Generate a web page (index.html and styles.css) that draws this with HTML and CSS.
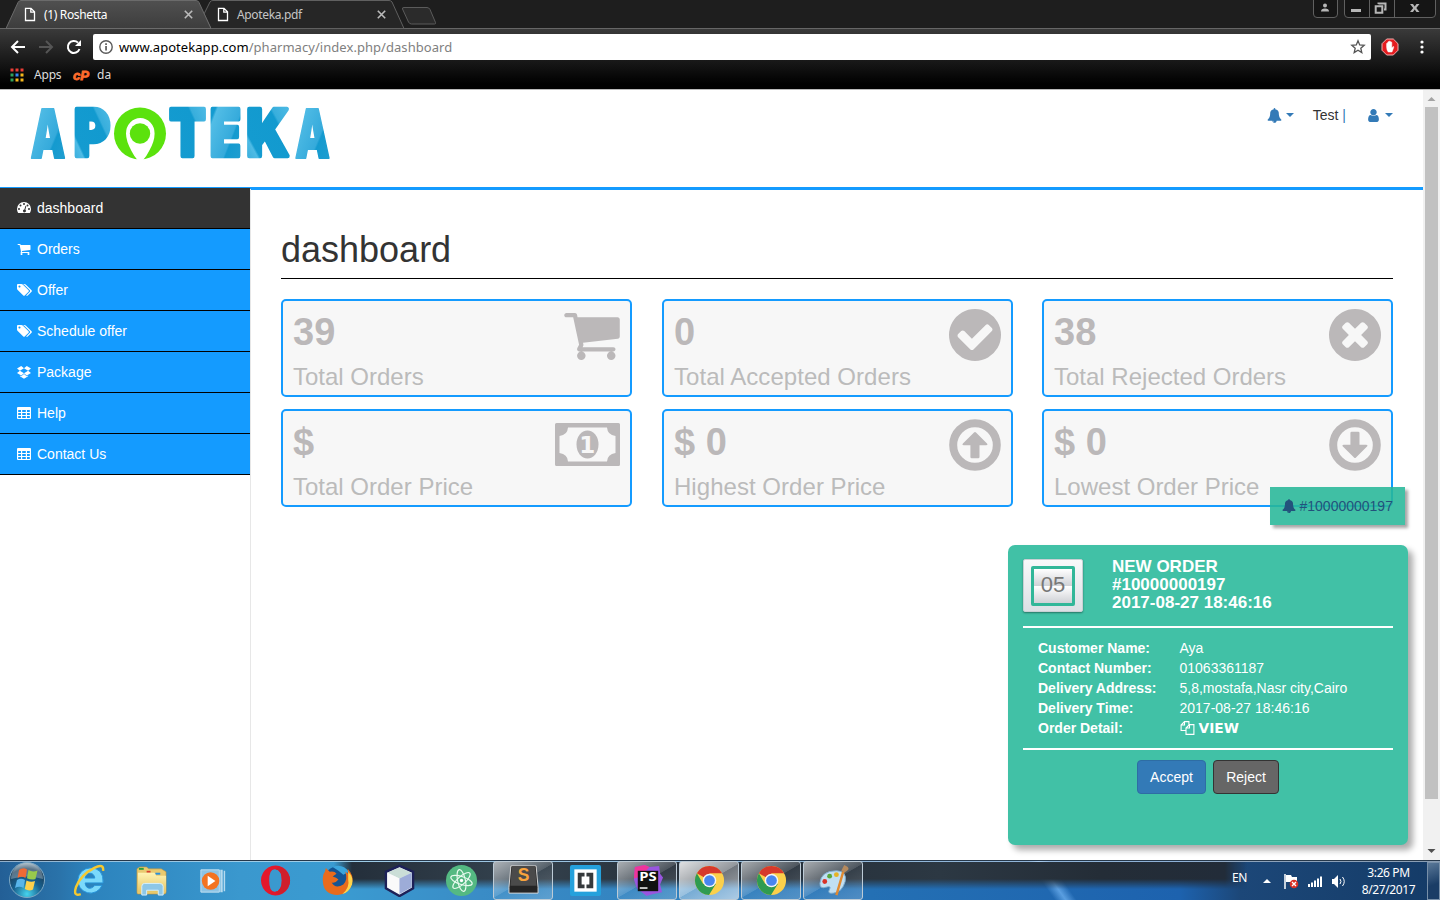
FILE: index.html
```html
<!DOCTYPE html>
<html lang="en">
<head>
<meta charset="utf-8">
<title>(1) Roshetta</title>
<link rel="stylesheet" href="styles.css">
</head>
<body>
<svg class="defs" width="0" height="0">
  <defs>
    <symbol id="cart" viewBox="0 0 1792 1792"><path d="M704 1536q0 52-38 90t-90 38-90-38-38-90 38-90 90-38 90 38 38 90zm896 0q0 52-38 90t-90 38-90-38-38-90 38-90 90-38 90 38 38 90zm128-1088v512q0 24-16.500 42.500t-40.500 21.500l-1044 122q13 60 13 70 0 16-24 64h920q26 0 45 19t19 45-19 45-45 19h-1024q-26 0-45-19t-19-45q0-11 8-31.500t16-36 21.500-40 15.500-29.500l-177-823h-204q-26 0-45-19t-19-45 19-45 45-19h256q16 0 28.500 6.500t19.500 15.500 13 24.500 8 26 5.500 29.500 4.500 26h1201q26 0 45 19t19 45z"/></symbol>
    <symbol id="check" viewBox="0 0 1792 1792"><path d="M1412 734q0-28-18-46l-91-90q-19-19-45-19t-45 19l-408 407-226-226q-19-19-45-19t-45 19l-91 90q-18 18-18 46 0 27 18 45l362 362q19 19 45 19 27 0 46-19l543-543q18-18 18-45zm252 162q0 209-103 385.500t-279.500 279.500-385.500 103-385.500-103-279.500-279.500-103-385.500 103-385.500 279.500-279.500 385.500-103 385.500 103 279.500 279.500 103 385.500z"/></symbol>
    <symbol id="times" viewBox="0 0 1792 1792"><path d="M1277 1122q0-26-19-45l-181-181 181-181q19-19 19-45 0-27-19-46l-90-90q-19-18-46-18-26 0-45 18l-181 181-181-181q-19-18-45-18-27 0-46 18l-90 90q-19 19-19 46 0 26 19 45l181 181-181 181q-19 19-19 45 0 27 19 46l90 90q19 18 46 18 26 0 45-18l181-181 181 181q19 18 45 18 27 0 46-18l90-90q19-19 19-46zm387-226q0 209-103 385.500t-279.500 279.500-385.500 103-385.500-103-279.500-279.500-103-385.500 103-385.500 279.500-279.500 385.500-103 385.500 103 279.500 279.500 103 385.500z"/></symbol>
    <symbol id="arrow" viewBox="0 0 52 52"><circle cx="26" cy="26" r="21.800" fill="none" stroke="currentColor" stroke-width="8"/><path d="M25 13.500q1-1 2 0l11 11q1.200 1.500-.8 1.800H30.500V38q0 1.300-1.300 1.300h-6.500q-1.300 0-1.300-1.300V26.300h-6.700q-2-.3-.8-1.800z"/></symbol>
    <symbol id="bell" viewBox="0 0 1792 1792"><path d="M912 1696q0-16-16-16-59 0-101.500-42.500t-42.500-101.500q0-16-16-16t-16 16q0 73 51.500 124.500t124.500 51.500q16 0 16-16zm816-288q0 52-38 90t-90 38h-448q0 106-75 181t-181 75-181-75-75-181h-448q-52 0-90-38t-38-90q50-42 91-88t85-119.500 74.500-158.500 50-206 19.500-260q0-152 117-282.500t307-158.500q-8-19-8-39 0-40 28-68t68-28 68 28 28 68q0 20-8 39 190 28 307 158.500t117 282.500q0 139 19.500 260t50 206 74.500 158.500 85 119.500 91 88z"/></symbol>
    <symbol id="user" viewBox="0 0 1792 1792"><path d="M1536 1399q0 109-62.500 187t-150.500 78h-854q-88 0-150.500-78t-62.500-187q0-85 8.500-160.500t31.500-152 58.500-131 94-89 134.500-34.500q131 128 313 128t313-128q76 0 134.500 34.500t94 89 58.500 131 31.500 152 8.500 160.500zm-256-887q0 159-112.500 271.500t-271.500 112.500-271.500-112.500-112.500-271.500 112.500-271.500 271.500-112.500 271.500 112.500 112.500 271.500z"/></symbol>
    <symbol id="tags" viewBox="0 0 2048 1792"><path d="M576 448q0-53-37.500-90.500t-90.500-37.500-90.500 37.500-37.500 90.500 37.500 90.500 90.500 37.500 90.500-37.500 37.500-90.500zm1067 576q0 53-37 90l-491 492q-39 37-91 37-53 0-90-37l-715-716q-38-37-64.500-101t-26.500-117v-416q0-52 38-90t90-38h416q53 0 117 26.500t102 64.500l715 714q37 39 37 91zm384 0q0 53-37 90l-491 492q-39 37-91 37-36 0-59-14t-53-45l470-470q37-37 37-90 0-52-37-91l-715-714q-38-38-102-64.500t-117-26.500h224q53 0 117 26.500t102 64.500l715 714q37 39 37 91z"/></symbol>
    <symbol id="gauge" viewBox="0 0 14 14"><path fill-rule="evenodd" d="M0 8a7 7 0 0 1 14 0q0 2-1 3.700-.2.300-.6.300H1.600q-.4 0-.6-.3Q0 10 0 8zM1 8a1 1 0 1 0 2 0 1 1 0 1 0-2 0zM2.500 4.500a1 1 0 1 0 2 0 1 1 0 1 0-2 0zM6 3a1 1 0 1 0 2 0 1 1 0 1 0-2 0zM9.500 4.500a1 1 0 1 0 2 0 1 1 0 1 0-2 0zM11 8a1 1 0 1 0 2 0 1 1 0 1 0-2 0zM8.300 5.200l-.9 3.200a1.500 1.500 0 1 0 1 .3l.8-3.200q.1-.6-.3-.7t-.6.400z"/></symbol>
    <symbol id="box" viewBox="0 0 14 14"><path d="M4.200 1L7 3.300 2.900 5.800 0 3.600zM9.800 1L14 3.600l-2.900 2.200L7 3.300zM0 8.100l2.900-2.300L7 8.300l-2.800 2.300zM14 8.100l-2.900-2.300L7 8.300l2.800 2.300zM7 8.900l2.800 2.300 1.300-.8v.9L7 13.700l-4.100-2.400v-.9l1.300.8z"/></symbol>
    <symbol id="table" viewBox="0 0 14 14"><path fill-rule="evenodd" d="M1 1h12q1 0 1 1v10q0 1-1 1H1q-1 0-1-1V2q0-1 1-1zM1.200 4v2H4V4zM5.200 4v2h3.600V4zM10 4v2h2.800V4zM1.200 7v2H4V7zM5.200 7v2h3.600V7zM10 7v2h2.800V7zM1.200 10v2H4v-2zM5.200 10v2h3.600v-2zM10 10v2h2.800v-2z"/></symbol>
    <symbol id="files" viewBox="0 0 14 14"><path fill="none" stroke="currentColor" stroke-width="1.100" d="M5 9.500H.6V4L4 .6h4.400V4M.5 4H4V.5M5.500 7v6.400h7.900V3.600H9zM5.500 7H9V3.500"/></symbol>
    <symbol id="page" viewBox="0 0 12 15"><path fill="none" stroke="#fff" stroke-width="1.300" d="M1.500 1.300h5.500l3.500 3.500v8.700h-9zM6.800 1.300v3.800h3.700"/></symbol>
    <symbol id="close" viewBox="0 0 9 9"><path fill="none" stroke="currentColor" stroke-width="1.600" d="M.8.800l7.400 7.400M8.200.800L.8 8.200"/></symbol>
    <symbol id="chrome" viewBox="0 0 32 32"><circle cx="16" cy="16" r="15" fill="#fbd04b"/><path fill="#d6392b" d="M16 16L3 8.500A15 15 0 0 1 29 8.500H16z"/><path fill="#2f9b51" d="M3 8.500A15 15 0 0 0 15.500 31L22.500 19.500 16 16 9.500 19.500z"/><circle cx="16" cy="16" r="7" fill="#f4f4f4"/><circle cx="16" cy="16" r="5.500" fill="#4886ef"/></symbol>
    <linearGradient id="lg" x1="0" y1="0" x2="1" y2="1"><stop offset="0" stop-color="#149bd0"/><stop offset=".18" stop-color="#149bd0"/><stop offset=".22" stop-color="#52bde6"/><stop offset=".62" stop-color="#35aadb"/><stop offset=".65" stop-color="#149acf"/><stop offset="1" stop-color="#249fd0"/></linearGradient>
    <linearGradient id="lg2" x1="1" y1="0" x2="0" y2="1"><stop offset="0" stop-color="#55bfe8"/><stop offset=".3" stop-color="#38aedc"/><stop offset=".33" stop-color="#129acf"/><stop offset=".75" stop-color="#149bd0"/><stop offset=".78" stop-color="#4ebbe5"/><stop offset="1" stop-color="#2ca6d7"/></linearGradient>
    <linearGradient id="tabg" x2="0" y2="1"><stop stop-color="#505050"/><stop offset="1" stop-color="#3d3d3d"/></linearGradient>
    <radialGradient id="orb" cx=".5" cy=".9" r=".9"><stop stop-color="#46d4ee"/><stop offset=".45" stop-color="#17608e"/><stop offset=".8" stop-color="#1b3e59"/><stop offset="1" stop-color="#9fb5c3"/></radialGradient>
    <linearGradient id="folder" x2="0" y2="1"><stop stop-color="#fff4b4"/><stop offset="1" stop-color="#e6c665"/></linearGradient>
  </defs>
</svg>

<header class="browser">
  <div class="strip">
    <svg class="tabs-shape" width="440" height="29" viewBox="0 0 440 29">
      <path d="M204 14l6-12q1-1.500 3-1.500h176q2 0 3 1.500l12 26.500H211z" fill="#262626" stroke="#606060"/>
      <path d="M6 28.500l12-26q1-2 3-2h175q2 0 3 2l12 26z" fill="url(#tabg)" stroke="#6b6b6b"/>
      <path d="M404 7.500h23q2 0 3 2l5.500 13q.5 1.500-1 1.500h-23q-2 0-3-2l-6-13q-.5-1.500 1.500-1.500z" fill="#2b2b2b" stroke="#5b5b5b"/>
    </svg>
    <div class="tab tab-a"><svg class="pg"><use href="#page"/></svg><span>(1) Roshetta</span><svg class="cl"><use href="#close"/></svg></div>
    <div class="tab tab-b"><svg class="pg"><use href="#page"/></svg><span>Apoteka.pdf</span><svg class="cl"><use href="#close"/></svg></div>
    <svg class="winctl" width="126" height="20" viewBox="0 0 126 20">
      <g fill="#151515" stroke="#606060"><path d="M.5-1v15q0 3.500 3.500 3.500h17q3.500 0 3.500-3.500V-1zM31.500-1v15q0 3.500 3.500 3.500h84q3.500 0 3.500-3.500V-1z"/><path d="M56.500 0v17M81.500 0v17"/></g>
      <g fill="#b6b6b6"><circle cx="12" cy="5.500" r="2"/><path d="M8 11.500q0-3 4-3t4 3zM38 9h10v3H38z"/><path d="M97 4h3l1.700 2.500L103.500 4h3l-3.200 4 3.200 4h-3l-1.800-2.500L100 12h-3l3.200-4z"/></g>
      <path d="M65.500 4V3.500h7v6H71M62.700 6.200h6.600v6.600h-6.600z" fill="none" stroke="#b6b6b6" stroke-width="2"/>
    </svg>
  </div>
  <div class="toolbar">
    <svg width="83" height="20" viewBox="0 0 83 20"><g fill="none" stroke-width="2"><path d="M25 10H12.500M18 4l-6 6 6 6" stroke="#fff"/><path d="M39 10h12.500M46 4l6 6-6 6" stroke="#555"/><path d="M79.500 12A6 6 0 1 1 78 5.600" stroke="#fff"/></g><path d="M81 3v6h-6z" fill="#fff"/></svg>
    <div class="omni">
      <svg width="16" height="16" viewBox="0 0 16 16"><circle cx="8" cy="8" r="6.200" fill="none" stroke="#5a5a5a" stroke-width="1.400"/><path d="M7.200 7h1.700v4.500H7.200zM7.200 4.200h1.700v1.700H7.200z" fill="#5a5a5a"/></svg>
      <span class="url">www.apotekapp.com<i>/pharmacy/index.php/dashboard</i></span>
      <svg class="star" width="16" height="16" viewBox="0 0 16 16"><path d="M8 1.800l1.700 4.100 4.500.4-3.400 2.900 1 4.400L8 11.300l-3.800 2.300 1-4.400-3.400-2.900 4.500-.4z" fill="none" stroke="#555" stroke-width="1.300"/></svg>
    </div>
    <svg width="18" height="18" viewBox="0 0 18 18"><path d="M5.700 1h6.600L17 5.700v6.600L12.300 17H5.700L1 12.300V5.700z" fill="#e51c20" stroke="#f0b0b0"/><path d="M5.600 8V5.500q.6-.8 1.200 0V8V4q.7-.8 1.300 0v3.500-4q.7-.8 1.400 0v4V4.300q.7-.7 1.300 0V10l1.300-1.500q1 0 .6.900L11 14H7.200Q5.600 12 5.600 9z" fill="#fff" stroke="#fff" stroke-width=".5"/></svg>
    <svg class="dots" width="4" height="14" viewBox="0 0 4 14"><g fill="#fff"><circle cx="2" cy="2" r="1.600"/><circle cx="2" cy="7" r="1.600"/><circle cx="2" cy="12" r="1.600"/></g></svg>
  </div>
  <div class="marks">
    <svg width="14" height="14" viewBox="0 0 14 14"><path d="M.5.500h3v3h-3zM5.500.500h3v3h-3zM10.500.500h3v3h-3z" fill="#ea3e37"/><path d="M.5 5.500h3v3h-3z" fill="#2fa15b"/><path d="M5.500 5.500h3v3h-3z" fill="#3385f0"/><path d="M10.500 5.500h3v3h-3zM5.500 10.500h3v3h-3zM10.500 10.500h3v3h-3z" fill="#f5b81c"/><path d="M.5 10.500h3v3h-3z" fill="#2fa15b"/></svg>
    <span class="m1">Apps</span>
    <svg class="cp" width="18" height="20" viewBox="0 0 18 20"><text x="1" y="14.500" textLength="16" lengthAdjust="spacingAndGlyphs">cP</text></svg>
    <span class="m2">da</span>
  </div>
</header>

<div class="viewport">
  <div class="page">
    <div class="top">
      <svg class="logo" width="314" height="86" viewBox="0 -12 314 86" role="img">
        <g class="word">
          <text class="thin" transform="translate(4.500 53.500) scale(.76 1)" textLength="46" lengthAdjust="spacingAndGlyphs" fill="url(#lg)" stroke="url(#lg)">A</text>
          <text transform="translate(48 52) scale(.8 1)" textLength="45" lengthAdjust="spacingAndGlyphs" fill="url(#lg2)" stroke="url(#lg2)">P</text>
          <text transform="translate(143.500 52) scale(.8 1)" textLength="45" lengthAdjust="spacingAndGlyphs" fill="url(#lg2)" stroke="url(#lg2)">T</text>
          <text transform="translate(184 52) scale(.75 1)" textLength="41" lengthAdjust="spacingAndGlyphs" fill="url(#lg)" stroke="url(#lg)">E</text>
          <text transform="translate(220.500 52) scale(.85 1)" textLength="50" lengthAdjust="spacingAndGlyphs" fill="url(#lg2)" stroke="url(#lg2)">K</text>
          <text class="thin" transform="translate(269 53.500) scale(.76 1)" textLength="46" lengthAdjust="spacingAndGlyphs" fill="url(#lg)" stroke="url(#lg)">A</text>
        </g>
        <circle cx="114" cy="29.500" r="26" fill="#5be20d"/>
        <path d="M111.500 56q-3-3-6-9-5.500-10-5.500-17.500a14.300 15.500 0 0 1 28.600 0q0 8-5.500 17.500-3 6-6 9z" fill="#fff"/>
        <circle cx="114" cy="29.500" r="10.200" fill="#5be20d"/>
      </svg>
      <div class="topnav">
        <svg class="fa"><use href="#bell"/></svg><b class="caret"></b>
        <span class="test">Test <em>|</em></span>
        <svg class="fa usr"><use href="#user"/></svg><b class="caret"></b>
      </div>
    </div>
    <div class="body">
      <nav class="side">
        <a class="on"><svg><use href="#gauge"/></svg>dashboard</a>
        <a><svg><use href="#cart"/></svg>Orders</a>
        <a><svg class="wide"><use href="#tags"/></svg>Offer</a>
        <a><svg class="wide"><use href="#tags"/></svg>Schedule offer</a>
        <a><svg><use href="#box"/></svg>Package</a>
        <a><svg><use href="#table"/></svg>Help</a>
        <a><svg><use href="#table"/></svg>Contact Us</a>
      </nav>
      <main>
        <h1>dashboard</h1>
        <div class="cards">
          <div class="card"><div><strong>39</strong><p>Total Orders</p></div><svg class="i-cart" viewBox="64 256 1664 1408"><use href="#cart" width="1792" height="1792"/></svg></div>
          <div class="card mid"><div><strong>0</strong><p>Total Accepted Orders</p></div><svg class="i-round" viewBox="128 128 1536 1536"><use href="#check" width="1792" height="1792"/></svg></div>
          <div class="card"><div><strong>38</strong><p>Total Rejected Orders</p></div><svg class="i-round" viewBox="128 128 1536 1536"><use href="#times" width="1792" height="1792"/></svg></div>
          <div class="card"><div><strong>$</strong><p>Total Order Price</p></div>
            <svg class="i-money" viewBox="0 0 65 43"><path fill-rule="evenodd" d="M1.500 0h62q1.500 0 1.500 1.500v40q0 1.500-1.500 1.500h-62Q0 43 0 41.500v-40Q0 0 1.500 0zM13 4.500Q12.500 12 4.500 13v17q8 1 8.500 8.500h39q.5-7.500 8.500-8.500V13Q52.500 12 52 4.500z"/><ellipse cx="32.500" cy="21.500" rx="11" ry="14"/><text x="32.300" y="29.700" text-anchor="middle">1</text></svg></div>
          <div class="card mid"><div><strong>$ 0</strong><p>Highest Order Price</p></div><svg class="i-round"><use href="#arrow"/></svg></div>
          <div class="card"><div><strong>$ 0</strong><p>Lowest Order Price</p></div><svg class="i-round flip"><use href="#arrow"/></svg></div>
        </div>
      </main>
    </div>
    <a class="toast"><svg><use href="#bell"/></svg>#10000000197</a>
    <section class="order">
      <div class="ohead">
        <div class="clock"><div>05</div></div>
        <h4>NEW ORDER<br>#10000000197<br>2017-08-27 18:46:16</h4>
      </div>
      <dl>
        <dt>Customer Name:</dt><dd>Aya</dd>
        <dt>Contact Number:</dt><dd>01063361187</dd>
        <dt>Delivery Address:</dt><dd>5,8,mostafa,Nasr city,Cairo</dd>
        <dt>Delivery Time:</dt><dd>2017-08-27 18:46:16</dd>
        <dt>Order Detail:</dt><dd class="view"><svg><use href="#files"/></svg>VIEW</dd>
      </dl>
      <div class="btns"><button class="acc">Accept</button><button class="rej">Reject</button></div>
    </section>
  </div>
  <div class="scroll">
    <svg width="17" height="17" viewBox="0 0 17 17"><path d="M4.500 11l4-4 4 4z" fill="#a3a3a3"/></svg>
    <i></i>
    <svg width="17" height="17" viewBox="0 0 17 17"><path d="M4.500 6l4 4 4-4z" fill="#505050"/></svg>
  </div>
</div>

<footer class="taskbar">
  <div class="start"><svg width="40" height="38" viewBox="0 0 40 38"><circle cx="20" cy="19" r="17.500" fill="url(#orb)" stroke="#7fa9c4"/><path d="M4 18a16 16 0 0 1 32 0q-16-5-32 0z" fill="#fff" opacity=".28"/><path d="M12 9q4-3 8-.5L18.500 17q-4-2.500-8 0z" fill="#ee6a35"/><path d="M21.500 9q4 2.500 9 .5L28.500 18q-4 1.500-8.500-.8z" fill="#98ca4c"/><path d="M10 19q4-2.500 8 0l-1.500 8q-4-2.500-8.500 0z" fill="#58b5ea"/><path d="M19.500 19.500q4.500 2.300 8.500.5l-2 8.500q-4 2-8.200-.5z" fill="#fdd14c"/></svg></div>
  <div class="app"><svg viewBox="0 0 34 34"><path d="M17.500 4A13 13 0 1 0 30 22h-7.500q-2 3-5 3-4.500 0-5-5.500H31Q32 4 17.500 4zM12.500 14.500q1-5 5-5t5 5z" fill="#7bd9fb" stroke="#2592d8" fill-rule="evenodd"/><path d="M8 31Q0 34 3 24 8 11 22 4q10-5 9 3" fill="none" stroke="#f6c92f" stroke-width="2.500"/></svg></div>
  <div class="app"><svg viewBox="0 0 34 34"><path d="M2 5l3-2h7l2 2h13l5 3v21q0 2-2 2H3q-1 0-1-2z" fill="#e9ca70" stroke="#b9923f" stroke-width=".6"/><path d="M4 4h5v2H4z" fill="#2c9e3c"/><path d="M12 7h4v2h-4z" fill="#d9402d"/><path d="M21 9h5v2h-5z" fill="#2a91dd"/><path d="M3 9h17l2 3h10v17H3z" fill="url(#folder)"/><path d="M7 32v-9q0-3 3-3h15q4 0 4 3v9h-5v-5H12v5z" fill="#8dc7e7" stroke="#d5f0ff"/></svg></div>
  <div class="app"><svg viewBox="0 0 34 34"><path d="M24 6h2.500v23H24zM27.500 7h1.500v21h-1.500z" fill="#b5daef"/><path d="M4 6h19v23H4z" fill="#8dc4e5" stroke="#c2e1f2"/><circle cx="14" cy="17.500" r="9" fill="#f37321"/><path d="M11 12l8 5.500-8 5.500z" fill="#fff"/></svg></div>
  <div class="app"><svg viewBox="0 0 34 34"><path fill-rule="evenodd" d="M17 1.500a15 15.500 0 1 0 .1 0zm0 4q6.500 1 6.500 11.500T17 28.500 10.500 17 17 5.500z" fill="#e3182b"/><path d="M23 3.500q9 5 9 13.500t-9 13.500q-3 1-6-2 6.500-1 6.500-11.500T17 5.500q3-3 6-2z" fill="#cf1f2b"/></svg></div>
  <div class="app"><svg viewBox="0 0 34 34"><circle cx="17" cy="16.500" r="14" fill="#145493"/><path d="M12 3q10-4 17 5l-6 3-5-4z" fill="#3ba5dc"/><path d="M4 8l1-4 4 4q5-1 7 2l-4 3q4 1 6 3-3 4-7 3 4 7 12 2 5-5 2-13l3 2-.5-5Q34 12 32 19q-3 12-15 13Q3 31 2 19 1 12 4 8z" fill="#e86b1c"/><path d="M28 8q6 6 4 13-3 8-10 10 8-7 6-15z" fill="#ffd34b"/></svg></div>
  <div class="app"><svg viewBox="0 0 34 34"><path d="M17 2l14 6v17l-14 8L3 25V8z" fill="#e7edf2" stroke="#1d2158" stroke-width="2.500"/><path d="M17 3.500L29.500 9 17 15 4.500 9z" fill="#cbded7"/><path d="M17 15v16L4.500 24V9z" fill="#fafafa"/><path d="M17 15v16l12.500-7V9z" fill="#9dacd8"/></svg></div>
  <div class="app"><svg viewBox="0 0 34 34"><circle cx="17" cy="17" r="16" fill="#54b982"/><g fill="none" stroke="#e8faef" stroke-width="1.200"><ellipse cx="17" cy="17" rx="4" ry="11.500" transform="rotate(-12 17 17)"/><ellipse cx="17" cy="17" rx="4" ry="11.500" transform="rotate(48 17 17)"/><ellipse cx="17" cy="17" rx="4" ry="11.500" transform="rotate(108 17 17)"/></g><circle cx="17" cy="17" r="1.700" fill="#fff"/></svg></div>
  <div class="app open"><svg viewBox="0 0 34 34"><path d="M4 2h26l2 22v6H2v-6z" fill="#252525" stroke="#d7d7d7"/><path d="M5 2h24l1.500 20.500h-27z" fill="#4a4a4a"/><text class="sub" x="17" y="18" text-anchor="middle">S</text></svg></div>
  <div class="app"><svg viewBox="0 0 34 34"><rect x="1" y="1" width="32" height="32" rx="2" fill="#25a1dc"/><path d="M5.500 5.500h23v23h-23z" fill="#fff"/><path d="M9 9h7v4h-3v8h3v4H9zM25 9h-7v4h3v8h-3v4h7z" fill="#35393c"/></svg></div>
  <div class="app open"><svg viewBox="0 0 34 34"><path d="M4 3l10-2 5 2 10-1 1 8 3 4-3 7 2 8-9 2-7 2L6 25 3 16z" fill="#9856df"/><path d="M4 3l10-2 5 2-9 10-7 2z" fill="#ef359a"/><path d="M7 7h21v21H7z" fill="#111"/><text class="ps" x="8.500" y="18" textLength="18" lengthAdjust="spacingAndGlyphs">PS</text><path d="M9 24h8v1.500H9z" fill="#fff"/></svg></div>
  <div class="app open active"><svg viewBox="0 0 34 34"><use href="#chrome" x="1" y="1" width="32" height="32"/></svg></div>
  <div class="app open"><svg viewBox="0 0 34 34"><use href="#chrome" x="1" y="1" width="32" height="32"/></svg></div>
  <div class="app open"><svg viewBox="0 0 34 34"><path d="M3 20Q4 7 20 7q11 0 9 11-3 11-12 12-7 1-4-4 2-4-4-2-6 2-6-4z" fill="#c1dff2" stroke="#7fadcf"/><circle cx="8" cy="18" r="2.500" fill="#d93227"/><circle cx="13" cy="12.500" r="2.500" fill="#57a83c"/><circle cx="20" cy="11" r="2.500" fill="#e5b325"/><path d="M28 1q7 3 3 6l-3 2-3-2z" fill="#b58a5e"/><path d="M27 8L20 32" stroke="#e08a31" stroke-width="2.500"/></svg></div>
  <div class="tray">
    <span class="en">EN</span>
    <svg class="t-icons" width="90" height="20" viewBox="0 0 90 20"><path d="M4 12l4-4 4 4z" fill="#fff"/><path d="M26 3v15" stroke="#fff" stroke-width="1.500"/><path d="M27 4h5l1 2h5v6h-5l-1-1h-5z" fill="#fff"/><circle cx="35" cy="13" r="4.300" fill="#d93025"/><path d="M33 11l4 4m0-4l-4 4" stroke="#fff" stroke-width="1.300"/><path d="M49 13h2v3h-2zM52 11.500h2V16h-2zM55 9.500h2V16h-2zM58 7.500h2V16h-2zM61 5.500h2V16h-2z" fill="#fff"/><path d="M73 8h2l4-4v13l-4-4h-2z" fill="#fff"/><path d="M81 8q2 2.500 0 5M83.500 6q3.500 4.500 0 9" fill="none" stroke="#fff"/></svg>
    <div class="time">3:26 PM<br>8/27/2017</div>
    <i class="peek"></i>
  </div>
</footer>
</body>
</html>
```
FILE: styles.css
```css
* { box-sizing: border-box; }
body { margin: 0; width: 1440px; height: 900px; overflow: hidden; display: flex; flex-direction: column; background: #fff; font: 14px/20px "Liberation Sans", Arial, sans-serif; color: #333; }
svg { display: block; flex: none; fill: currentColor; }
.defs { position: absolute; }

/* browser frame */
.browser { height: 90px; flex: none; font: 12px/16px "Noto Sans", "Open Sans", sans-serif; color: #ddd; border-bottom: 1px solid #b9b9b9; background: linear-gradient(#1e1e1e 0 28px, #666 28px 29px, #3a3a3a 29px, #000 84px); }
.strip { position: relative; height: 29px; display: flex; align-items: center; padding-left: 24px; }
.tabs-shape { position: absolute; left: 0; top: 0; }
.tab { position: relative; display: flex; align-items: center; width: 193px; letter-spacing: -.35px; height: 29px; }
.tab .pg { width: 12px; height: 15px; }
.tab span { margin-left: 8px; flex: 1; }
.tab .cl { width: 9px; height: 9px; margin-right: 24px; color: #bbb; }
.tab-a { color: #fff; }
.tab-b { color: #c5c5c5; }
.winctl { margin-left: auto; align-self: flex-start; margin-right: 1px; }
.toolbar { display: flex; align-items: center; height: 36px; }
.omni { display: flex; align-items: center; width: 1278px; height: 26px; margin-left: 10px; margin-right: 10px; padding: 0 5px; background: #fff; border-radius: 2px; color: #000; }
.url { font-size: 13px; margin-left: 5px; letter-spacing: .05px; }
.url i { font-style: normal; color: #808080; }
.star { margin-left: auto; }
.dots { margin-left: 21px; }
.marks { display: flex; align-items: center; height: 20px; padding-left: 10px; }
.m1 { margin-left: 10px; width: 38px; letter-spacing: -.2px; }
.m2 { margin-left: 7px; }
.cp { font: italic 900 13px "Liberation Sans", sans-serif; fill: #ff6c2c; stroke: #ff6c2c; stroke-width: .8; }

/* page */
.viewport { height: 770px; flex: none; display: flex; }
.page { position: relative; width: 1423px; display: flex; flex-direction: column; }
.top { height: 100px; flex: none; border-bottom: 3px solid #149bff; display: flex; justify-content: space-between; padding: 2px 30px 0 26px; }
.word { font: 900 64px Inter, "Open Sans", sans-serif; stroke-width: 4.500; stroke-linejoin: round; }
.word .thin { font-size: 68px; stroke-width: 2; }
.topnav { display: flex; align-items: center; height: 22px; margin-top: 12px; color: #337ab7; }
.topnav .fa { width: 15px; height: 15px; }
.caret { width: 0; height: 0; border: 4px solid transparent; border-top-color: #337ab7; border-bottom: 0; margin-left: 4px; }
.test { margin-left: 19px; color: #333; }
.test em { font-style: normal; color: #337ab7; }
.topnav .usr { margin-left: 20px; }
.body { display: flex; flex: 1; }
.side { width: 251px; margin-top: -2px; border-right: 1px solid #e7e7e7; border-image: linear-gradient(transparent 2px, #e7e7e7 2px) 1; position: relative; }
.side a { display: flex; align-items: center; width: 250px; height: 41px; padding-left: 17px; background: #149bff; border-bottom: 1px solid #000; color: #fff; }
.side a.on { background: #333; }
.side svg { width: 14px; height: 14px; margin-right: 6px; }
.side svg.wide { width: 16px; margin-left: -1px; margin-right: 5px; }
main { width: 1172px; padding: 40px 30px 0; }
h1 { margin: 0 0 20px; height: 49px; border-bottom: 1px solid #000; font-weight: 400; font-size: 36px; line-height: 40px; }
.cards { display: grid; grid-template-columns: repeat(3, 1fr); column-gap: 29.500px; row-gap: 12px; }
.card { height: 98px; border: 2px solid #149bff; border-radius: 5px; background: #f7f7f7; color: #bbb8b9; padding: 8px 10px; display: flex; justify-content: space-between; }
.mid { padding-left: 10.500px; }
.card strong { display: block; font-size: 38px; line-height: 46px; }
.card p { margin: 9px 0 0; font-size: 24px; line-height: 26px; white-space: nowrap; color: #bbb; }
.mid p { letter-spacing: .04px; }
.i-cart { width: 56px; height: 47px; margin-top: 4px; }
.i-round { width: 52px; height: 52px; }
.flip { transform: scaleY(-1); }
.i-money { width: 65px; height: 43px; margin-top: 4px; }
.i-money text { font: 700 23px "DejaVu Sans", sans-serif; fill: #f7f7f7; }

/* notifications lie over the dashboard */
.toast { position: absolute; left: 1270px; top: 397px; width: 135px; height: 38px; padding: 0 12px; display: flex; align-items: center; background: rgba(39,183,153,.88); color: #23527c; box-shadow: 3px 3px 3px rgba(0,0,0,.35); white-space: nowrap; }
.toast svg { width: 14px; height: 14px; margin-right: 3.500px; }
.order { position: absolute; left: 1008px; top: 455px; width: 400px; height: 300px; padding: 0 15px; border-radius: 7px; background: #41c1a6; color: #fff; box-shadow: 5px 5px 6px rgba(0,0,0,.33); }
.ohead { display: flex; height: 83px; border-bottom: 2px solid #fff; padding-top: 14px; }
.clock { width: 60px; height: 53px; border: 1px solid #c9d0d4; border-radius: 2px; background: linear-gradient(#f8f9fa, #dce0e5); box-shadow: 0 1px 2px rgba(0,0,0,.4); padding: 6px 7px; }
.clock div { height: 40px; border: 3px solid #31b799; border-radius: 2px; background: linear-gradient(#fff, #cfd1d6 50%, #fff 50%, #cfd1d6); color: #777; font-size: 22px; line-height: 31px; text-align: center; }
h4 { margin: -1px 0 0 29px; font-size: 17px; line-height: 18px; }
dl { display: grid; grid-template-columns: 141.500px 1fr; margin: 0; padding: 10px 15px; height: 122px; border-bottom: 2px solid #fff; line-height: 20px; }
dt { font-weight: 700; font-size: 14px; white-space: nowrap; }
dd { margin: 0; white-space: nowrap; }
.view { display: flex; align-items: center; font-weight: 700; font-family: "DejaVu Sans", sans-serif; font-size: 13.800px; }
.view svg { width: 15px; height: 14px; margin-right: 4px; }
.btns { display: flex; justify-content: center; gap: 7px; padding-top: 10px; }
button { height: 34px; padding: 0; border: 1px solid #2e6da4; border-radius: 4px; background: #337ab7; color: #fff; font: 14px "Liberation Sans", Arial, sans-serif; }
.acc { width: 69px; }
.rej { width: 66px; background: #666; border-color: #333; }

.scroll { width: 17px; display: flex; flex-direction: column; background: #f1f1f1; }
.scroll i { width: 13px; height: 692px; margin: 0 2px 44px; background: #c1c1c1; }

/* taskbar */
.taskbar { height: 40px; flex: none; display: flex; position: relative; isolation: isolate; border-top: 1px solid #26384b; box-shadow: inset 0 1px rgba(255,255,255,.5);
  background:
    linear-gradient(55deg, transparent 864px, #5a9ee0 873px, transparent 882px),
    linear-gradient(90deg, #235f96 0, #2a73aa 60px, #2c83bd 90px, #3a98ce 240px, #3a9bd1 340px, #3a8cc6 480px, #3080be 700px, #2470b4 870px, #1d62ae 1180px, #1c4778 1240px, #143b67 1440px); }
.taskbar::before { content: ""; position: absolute; inset: 1px 0 0; z-index: -1; mask-image: linear-gradient(#000 17px, transparent 27px); background: linear-gradient(90deg, transparent 334px, #242f3b 352px, #34424e 520px, #242d37 700px, #2c3843 940px, #242d37 1100px, #222c39 1225px, transparent 1247px); }
.start { width: 58.500px; padding: 0 7px; }
.app { width: 60px; height: 39px; margin-right: 2px; padding: 2px 0 0 13px; border: 1px solid transparent; border-radius: 3px; }
.app svg { width: 33px; height: 33px; }
.open { border-color: #bdcbd6; background: linear-gradient(150deg, rgba(255,255,255,.6), rgba(255,255,255,.18) 50%, rgba(255,255,255,.06) 51%, rgba(255,255,255,.2)); }
.active { background: linear-gradient(150deg, rgba(255,255,255,.85), rgba(255,255,255,.5) 50%, rgba(255,255,255,.35) 51%, rgba(255,255,255,.6)); }
.sub { font: 700 18px "Liberation Sans", sans-serif; fill: #f9a33c; }
.ps { font: 700 13px "Open Sans", sans-serif; fill: #fff; }
.tray { margin-left: auto; display: flex; align-items: center; color: #fff; font: 12px/17px "Noto Sans", "Open Sans", sans-serif; letter-spacing: -.4px; }
.en { margin-top: -6px; }
.t-icons { margin-left: 12px; }
.time { width: 78px; padding-left: 1px; text-align: center; }
.peek { width: 13px; height: 38px; border: 1px solid #7890a9; background: linear-gradient(160deg, #5a7898, #1a3d66 60%); }
```
